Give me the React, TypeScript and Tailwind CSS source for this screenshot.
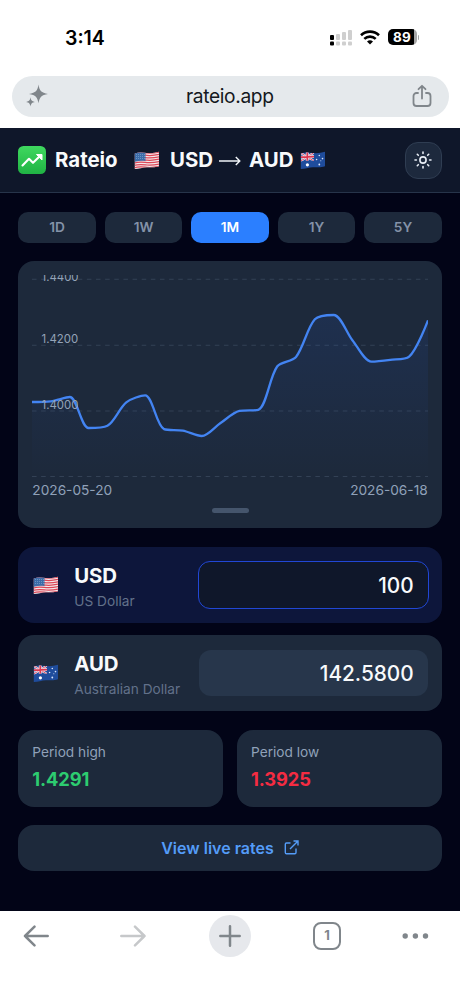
import React, { useState } from 'react'

interface Point {
  x: number
  y: number
}

const RANGES = ['1D', '1W', '1M', '1Y', '5Y']

// daily closes, already scaled to the plot area (396 x 202)
const SERIES = [
  127, 126.3, 122, 153, 150.7, 127.3, 120.4, 154.1, 155.6, 161, 148, 135.9, 134.8, 91.5, 82, 44.3, 40, 65.5, 86.6,
  84.8, 81.6, 45.3,
]

const STEP = 396 / (SERIES.length - 1)
const POINTS: Point[] = SERIES.map((y, i) => ({ x: i * STEP, y }))

const between = (v: number, a: number, b: number) => Math.max(Math.min(a, b), Math.min(Math.max(a, b), v))

const smoothPath = (points: Point[], smooth = 0.3) => {
  let d = `M${points[0].x} ${points[0].y}`
  let out = points[0]
  for (let i = 1; i < points.length; i++) {
    const prev = points[i - 1]
    const cur = points[i]
    const next = points[i + 1]
    let cp = cur
    let nextOut = cur
    if (next) {
      const lenPrev = Math.hypot(cur.x - prev.x, cur.y - prev.y)
      const lenNext = Math.hypot(next.x - cur.x, next.y - cur.y)
      const ratio = lenNext / (lenNext + lenPrev)
      const nx = between(cur.x + (next.x - prev.x) * smooth * ratio, cur.x, next.x)
      const ny = between(cur.y + (next.y - prev.y) * smooth * ratio, cur.y, next.y)
      const k = lenPrev / lenNext
      cp = {
        x: between(cur.x - (nx - cur.x) * k, prev.x, cur.x),
        y: between(cur.y - (ny - cur.y) * k, prev.y, cur.y),
      }
      nextOut = { x: cur.x + (cur.x - cp.x) / k, y: cur.y + (cur.y - cp.y) / k }
    }
    d += ` C${out.x} ${out.y} ${cp.x} ${cp.y} ${cur.x} ${cur.y}`
    out = nextOut
  }
  return d
}

const LINE = smoothPath(POINTS)

const UsFlag: React.FC = () => (
  <svg viewBox="0 0 26 19" className="h-[19px] w-[26px] shrink-0">
    <defs>
      <clipPath id="us-wave">
        <path d="M.8 2.5C5 .8 9 1.6 13 2S21 2 25 .8V15.2C21 16.8 17 16 13 16.2S5 17.8 .8 18Z" />
      </clipPath>
    </defs>
    <g clipPath="url(#us-wave)">
      <rect width="26" height="19" fill="#f3e9ec" />
      {[0, 1, 2, 3, 4, 5, 6].map((i) => (
        <path
          key={i}
          d={`M0 ${2.5 + i * 2.4}C5 ${0.8 + i * 2.4} 9 ${1.6 + i * 2.4} 13 ${2 + i * 2.4}S21 ${2 + i * 2.4} 26 ${0.8 + i * 2.4}`}
          stroke="#dc4657"
          strokeWidth="1.25"
          fill="none"
        />
      ))}
      <path d="M0 0H11.5V10C8 9.4 4 9.8 0 11Z" fill="#3c6ca8" />
      {[3.5, 5.5, 7.5].map((y) => (
        <path key={y} d={`M2 ${y}H11`} stroke="#9fbfe0" strokeWidth=".7" strokeDasharray=".7 1.3" />
      ))}
    </g>
  </svg>
)

const AuFlag: React.FC = () => (
  <svg viewBox="0 0 26 19" className="h-[19px] w-[26px] shrink-0">
    <defs>
      <clipPath id="au-wave">
        <path d="M.8 2.5C5 .8 9 1.6 13 2S21 2 25 .8V15.2C21 16.8 17 16 13 16.2S5 17.8 .8 18Z" />
      </clipPath>
      <clipPath id="au-jack">
        <path d="M.8 0H14V9.8C9 9.4 5 9.6 .8 10.6Z" />
      </clipPath>
    </defs>
    <g clipPath="url(#au-wave)">
      <rect width="26" height="19" fill="#1f4c9c" />
      <g clipPath="url(#au-jack)">
        <path d="M0 1.5L14 10M0 10.5L14 1.5" stroke="#e8e4f0" strokeWidth="2.2" />
        <path d="M0 1.5L14 10M0 10.5L14 1.5" stroke="#d8435a" strokeWidth=".9" />
        <path d="M7.3 0V11M0 6.2L14 5.6" stroke="#f0e8f0" strokeWidth="3" />
        <path d="M7.3 0V11M0 6.2L14 5.6" stroke="#dc3650" strokeWidth="1.7" />
      </g>
      <circle cx="7.4" cy="13.8" r="1.6" fill="#fff" />
      <g fill="#dce8ff">
        <circle cx="19.3" cy="4.5" r=".8" />
        <circle cx="16.6" cy="8.5" r=".8" />
        <circle cx="22.5" cy="7.6" r=".8" />
        <circle cx="20.8" cy="9.8" r=".5" />
        <circle cx="19.3" cy="13.5" r=".9" />
      </g>
    </g>
  </svg>
)

const StatusBar: React.FC = () => (
  <div className="flex h-[75.5px] items-center justify-between pl-[65px] pr-[41px]">
    <span className="text-[19.5px] font-semibold leading-6 text-black">3:14</span>
    <div className="flex items-center">
      <svg width="23" height="18" viewBox="0 0 23 18">
        <g fill="#cfcfcf">
          <rect x="6" y="5" width="4" height="6" rx="1" />
          <rect x="12" y="3" width="4" height="8" rx="1" />
          <rect x="18" y="1" width="4" height="10" rx="1" />
          <rect x="6" y="12.6" width="4" height="3.8" rx="1" />
          <rect x="12" y="12.6" width="4" height="3.8" rx="1" />
          <rect x="18" y="12.6" width="4" height="3.8" rx="1" />
        </g>
        <g fill="#000">
          <rect x="0" y="6" width="4" height="5" rx="1" />
          <rect x="0" y="12.6" width="4" height="3.8" rx="1" />
        </g>
      </svg>
      <svg width="20" height="15" viewBox="0 0 20 15" className="-mt-px ml-[7.5px]">
        <g fill="none" stroke="#000" strokeWidth="2.6">
          <path d="M1 5.2A13 13 0 0 1 19 5.2" />
          <path d="M4.3 8.9A8.4 8.4 0 0 1 15.7 8.9" />
        </g>
        <path d="M7 11.6A4.5 4.5 0 0 1 13 11.6L10 14.6Z" fill="#000" />
      </svg>
      <div className="-mt-px ml-[7.5px] flex h-4 w-[29px] items-center justify-center overflow-hidden rounded-[5px] bg-linear-to-r from-black from-88% to-[#a6a6a6] to-88%">
        <span className="text-[13.5px] font-bold leading-4 tracking-[0.3px] text-white">89</span>
      </div>
      <div className="-mt-px ml-px h-[5px] w-[1.5px] rounded-r-full bg-[#a6a6a6]" />
    </div>
  </div>
)

const AddressBar: React.FC = () => (
  <div className="mx-[11.5px] flex h-[41px] items-center justify-between rounded-full bg-[#e5e9ec] pl-[13px] pr-[16.5px]">
    <svg width="24" height="24" viewBox="0 0 24 24" fill="#80868b">
      <path d="M13.5 .5C14.5 6.8 16.3 8.8 23 9.9C16.3 11 14.5 13 13.5 19.3C12.5 13 10.7 11 4 9.9C10.7 8.8 12.5 6.8 13.5 .5Z" />
      <path d="M5.5 13.3C6 16.4 7 17.4 10 17.9C7 18.4 6 19.4 5.5 22.5C5 19.4 4 18.4 1 17.9C4 17.4 5 16.4 5.5 13.3Z" />
    </svg>
    <span className="-ml-px -mt-px text-[19.2px] leading-6 tracking-[-0.35px] text-[#141820]">rateio.app</span>
    <svg width="20" height="24" viewBox="0 0 20 24" fill="none" stroke="#80868b" strokeWidth="1.8" strokeLinecap="round" strokeLinejoin="round">
      <path d="M6 9H4.5A3 3 0 0 0 1.5 12V19A3 3 0 0 0 4.5 22H15.5A3 3 0 0 0 18.5 19V12A3 3 0 0 0 15.5 9H14" />
      <path d="M10 14.6V2.2M6.5 5.2L10 1.8L13.5 5.2" />
    </svg>
  </div>
)

const Header: React.FC = () => (
  <header className="flex h-[65px] items-center border-b border-[#27344a] bg-[#0f172a] px-[18px] text-[20.4px] font-bold leading-7 text-slate-50">
    <svg width="28" height="28" viewBox="0 0 28 28">
      <defs>
        <linearGradient id="logo" x1="0" y1="0" x2="0" y2="1">
          <stop offset="0" stopColor="#3fd85f" />
          <stop offset="1" stopColor="#20b344" />
        </linearGradient>
      </defs>
      <rect width="28" height="28" rx="5.5" fill="url(#logo)" />
      <path d="M4.5 19.5L11 12.8L15 16.8L23 9" fill="none" stroke="#fff" strokeWidth="2.1" strokeLinejoin="round" strokeLinecap="round" />
      <path d="M18.5 8.5H24V14Z" fill="#fff" stroke="#fff" strokeWidth="1" strokeLinejoin="round" />
    </svg>
    <h1 className="ml-[9px] w-[79px]">Rateio</h1>
    <UsFlag />
    <span className="ml-[10px] w-[49px]">USD</span>
    <svg width="22" height="10" viewBox="0 0 22 10" fill="none" stroke="#f1f5f9" strokeWidth="1.4" className="mr-[8px] mt-[2px]">
      <path d="M0 5H20.5M16.8 1L20.8 5L16.8 9" />
    </svg>
    <span className="w-[51px]">AUD</span>
    <AuFlag />
    <button className="ml-auto flex size-[37px] items-center justify-center rounded-[13px] border border-[#2f3d52] bg-slate-800">
      <svg width="18" height="18" viewBox="0 0 18 18" fill="none" stroke="#e8edf5" strokeWidth="1.6" strokeLinecap="round" className="-ml-px">
        <circle cx="9" cy="9" r="3.1" />
        <path d="M9 1V2.4M9 15.6V17M1 9H2.4M15.6 9H17M3.3 3.3L4.3 4.3M13.7 13.7L14.7 14.7M3.3 14.7L4.3 13.7M13.7 4.3L14.7 3.3" />
      </svg>
    </button>
  </header>
)

const RateChart: React.FC = () => (
  <section className="mt-[18px] flex h-[267.5px] flex-col items-center rounded-2xl bg-[#1d293b] px-[14px] pt-[14px]">
    <svg width="396" height="206" viewBox="0 0 396 206" className="shrink-0">
      <defs>
        <linearGradient id="area" x1="0" y1="0" x2="0" y2="1">
          <stop offset="0" stopColor="#2b6cff" stopOpacity=".1" />
          <stop offset="1" stopColor="#2b6cff" stopOpacity="0" />
        </linearGradient>
      </defs>
      {[4.2, 70.2, 136, 201.5].map((y) => (
        <path key={y} d={`M0 ${y}H396`} stroke="#334155" strokeWidth="1.14" strokeDasharray="4.57 4.57" />
      ))}
      <path d={`${LINE} V201.5 H0 Z`} fill="url(#area)" />
      <path d={LINE} fill="none" stroke="#4384f2" strokeWidth="2.3" strokeLinejoin="round" />
      <g fill="#94a3b8" fontSize="11.4">
        <text x="9.5" y="6">1.4400</text>
        <text x="9.5" y="68">1.4200</text>
        <text x="9.5" y="134">1.4000</text>
      </g>
    </svg>
    <div className="-mt-[0.5px] flex w-full justify-between text-[13.7px] leading-5 text-slate-400">
      <span>2026-05-20</span>
      <span>2026-06-18</span>
    </div>
    <div className="mt-[7.5px] h-[5px] w-[37px] rounded-full bg-slate-600" />
  </section>
)

interface CurrencyRowProps {
  flag: React.ReactNode
  code: string
  name: string
  value: string
  active?: boolean
}

const CurrencyRow: React.FC<CurrencyRowProps> = ({ flag, code, name, value, active }) => (
  <div className={`flex h-[76.5px] items-center rounded-2xl pl-[15px] ${active ? 'bg-[#0d163b] pr-[13px]' : 'bg-[#1d293b] pr-[14px]'}`}>
    <div className="pt-[2px]">{flag}</div>
    <div className="ml-[15px] flex-1 pt-[7px]">
      <div className="text-[20.4px] font-bold leading-[26px] tracking-[-0.1px] text-slate-50">{code}</div>
      <div className="text-[13.7px] leading-6 text-[#62718a]">{name}</div>
    </div>
    <div
      className={`flex items-center justify-end rounded-xl pr-[14px] pt-px text-[20.8px] font-medium text-slate-50 ${
        active ? 'h-12 w-[231px] border-[1.2px] border-[#2147d5] bg-[#0f172a]' : 'h-[46px] w-[229px] bg-[#27364b]'
      }`}
    >
      {value}
    </div>
  </div>
)

const StatCard: React.FC<{ label: string; children: React.ReactNode }> = ({ label, children }) => (
  <div className="h-[77px] flex-1 rounded-2xl bg-[#1d293b] px-[14px] pt-[11px]">
    <div className="text-[13.7px] leading-[22px] text-slate-400">{label}</div>
    {children}
  </div>
)

const BrowserToolbar: React.FC = () => (
  <nav className="flex h-[50px] items-center pl-[23px] text-[#80868b]">
    <svg width="26" height="22" viewBox="0 0 26 22" fill="none" stroke="currentColor" strokeWidth="2.5" strokeLinecap="round" strokeLinejoin="round">
      <path d="M24.7 11H2M11.5 1.7L2 11L11.5 20.3" />
    </svg>
    <svg width="26" height="22" viewBox="0 0 26 22" fill="none" stroke="#c6c8ca" strokeWidth="2.5" strokeLinecap="round" strokeLinejoin="round" className="ml-[71px]">
      <path d="M1.3 11H24.5M15 1.7L24.5 11L15 20.3" />
    </svg>
    <div className="ml-[63px] flex size-[42px] items-center justify-center rounded-full bg-[#e6e8ec]">
      <svg width="22" height="22" viewBox="0 0 22 22" fill="none" stroke="currentColor" strokeWidth="2.5" strokeLinecap="round">
        <path d="M11 1.3V20.7M1.3 11H20.7" />
      </svg>
    </div>
    <div className="ml-[62px] flex size-7 items-center justify-center rounded-lg border-[2.4px] border-[#80868b] text-[13px] font-bold">1</div>
    <svg width="27" height="6" viewBox="0 0 27 6" fill="currentColor" className="ml-[61px]">
      <circle cx="3.2" cy="3" r="2.7" />
      <circle cx="13.4" cy="3" r="2.7" />
      <circle cx="23.5" cy="3" r="2.7" />
    </svg>
  </nav>
)

const App: React.FC = () => {
  const [range, setRange] = useState('1M')

  return (
    <div className="h-[1000px] w-[460px] overflow-hidden bg-white font-['Inter',sans-serif]">
      <StatusBar />
      <AddressBar />
      <div className="mt-[11.5px] h-[783px] bg-[#020417]">
        <Header />
        <main className="px-[18.3px] pt-[18.5px]">
          {/* Range picker */}
          <div className="flex gap-[9.15px]">
            {RANGES.map((r) => (
              <button
                key={r}
                onClick={() => setRange(r)}
                className={`h-[31px] flex-1 rounded-[10px] text-[13.7px] font-semibold ${
                  r === range ? 'bg-[#2b7fff] text-white' : 'bg-[#1d293b] text-[#8492a8]'
                }`}
              >
                {r}
              </button>
            ))}
          </div>

          <RateChart />

          {/* Converter */}
          <div className="mt-[18.5px] flex flex-col gap-[11.5px]">
            <CurrencyRow flag={<UsFlag />} code="USD" name="US Dollar" value="100" active />
            <CurrencyRow flag={<AuFlag />} code="AUD" name="Australian Dollar" value="142.5800" />
          </div>

          {/* Period stats */}
          <div className="mt-[18.5px] flex gap-[14px]">
            <StatCard label="Period high">
              <div className="mt-[2px] text-[18.3px] font-bold leading-7 tracking-[-0.1px] text-[#2dcc70]">1.4291</div>
            </StatCard>
            <StatCard label="Period low">
              <div className="mt-[2px] text-[18.3px] font-bold leading-7 tracking-[-0.1px] text-[#f42c42]">1.3925</div>
            </StatCard>
          </div>

          <button className="mt-[18px] flex h-[46px] w-full items-center justify-center gap-[10px] rounded-2xl bg-[#1d293b] text-base font-semibold text-[#549cf8]">
            <span>View live rates</span>
            <svg width="15" height="15" viewBox="0 0 15 15" fill="none" stroke="currentColor" strokeWidth="1.4">
              <path d="M6.5 3H2.5A1.2 1.2 0 0 0 1.3 4.2V12.5A1.2 1.2 0 0 0 2.5 13.7H10.8A1.2 1.2 0 0 0 12 12.5V8.5M9.5 1H14V5.5M14 1L6 9" />
            </svg>
          </button>
        </main>
      </div>
      <BrowserToolbar />
    </div>
  )
}

export default App
